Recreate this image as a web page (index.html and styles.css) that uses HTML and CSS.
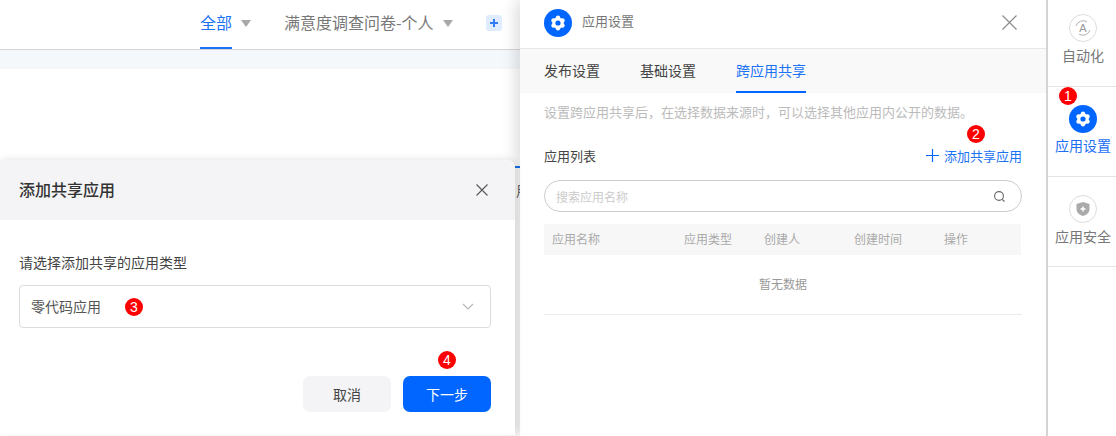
FILE: index.html
```html
<!DOCTYPE html>
<html lang="zh-CN">
<head>
<meta charset="utf-8">
<title>应用设置</title>
<link rel="stylesheet" href="styles.css">
</head>
<body>
<div class="app">
  <main class="main">
    <nav class="top-tabs">
      <div class="top-tab active"><span class="top-label">全部</span><i class="caret"></i></div>
      <div class="top-tab second"><span class="top-label">满意度调查问卷-个人</span><i class="caret"></i></div>
      <div class="add-tab"><svg width="10" height="10" viewBox="0 0 10 10"><path d="M5 1v8M1 5h8" stroke="#2f7cf6" stroke-width="2"/></svg></div>
    </nav>
    <div class="strip"></div>
    <div class="behind"><span class="behind-text">用</span></div>
  </main>

  <section class="drawer">
    <header class="drawer-head">
      <svg class="gear" width="28" height="28" viewBox="0 0 28 28"><circle cx="14" cy="14" r="14" fill="#0066ff"/><g fill="#fff"><circle cx="14" cy="14" r="5.800"/><circle cx="14" cy="8.800" r="2.200"/><circle cx="14" cy="19.200" r="2.200"/><circle cx="9.500" cy="11.400" r="2.200"/><circle cx="18.500" cy="11.400" r="2.200"/><circle cx="9.500" cy="16.600" r="2.200"/><circle cx="18.500" cy="16.600" r="2.200"/></g><circle cx="14" cy="14" r="2.600" fill="#0066ff"/></svg>
      <span class="drawer-title">应用设置</span>
      <svg class="drawer-close" width="15" height="15" viewBox="0 0 15 15"><path d="M.5.5l14 14M14.500.5l-14 14" stroke="#8c8c8c" stroke-width="1.200" fill="none"/></svg>
    </header>
    <div class="drawer-tabs">
      <span class="drawer-tab">发布设置</span>
      <span class="drawer-tab">基础设置</span>
      <span class="drawer-tab current">跨应用共享</span>
    </div>
    <div class="drawer-body">
      <p class="desc">设置跨应用共享后，在选择数据来源时，可以选择其他应用内公开的数据。</p>
      <div class="list-head">
        <span class="list-title">应用列表</span>
        <span class="add-link">
          <span class="badge badge-two">2</span>
          <svg width="13" height="13" viewBox="0 0 13 13"><path d="M6.500 0v13M0 6.500h13" stroke="#0066ff" stroke-width="1.200"/></svg>
          添加共享应用
        </span>
      </div>
      <div class="search">
        <span class="placeholder">搜索应用名称</span>
        <svg width="13" height="13" viewBox="0 0 13 13"><circle cx="6" cy="6" r="4.400" stroke="#666" stroke-width="1.100" fill="none"/><path d="M9.300 9.300l2.200 2.200" stroke="#666" stroke-width="1.100"/></svg>
      </div>
      <div class="table-head">
        <span class="col-name">应用名称</span>
        <span class="col-type">应用类型</span>
        <span class="col-owner">创建人</span>
        <span class="col-time">创建时间</span>
        <span>操作</span>
      </div>
      <div class="empty">暂无数据</div>
    </div>
  </section>

  <aside class="rail">
    <div class="rail-item first">
      <svg width="28" height="28" viewBox="0 0 28 28"><circle cx="14" cy="14" r="13.500" fill="#fff" stroke="#dcdcdc"/><path d="M7 12a7.500 7.500 0 0 1 11-4.200M21 16a7.500 7.500 0 0 1-11 4.200" fill="none" stroke="#b0b0b0" stroke-width="1"/><text class="auto-a" x="14" y="18" text-anchor="middle">A</text></svg>
      <span class="rail-label">自动化</span>
    </div>
    <div class="rail-item selected">
      <span class="badge badge-one">1</span>
      <svg width="28" height="28" viewBox="0 0 28 28"><circle cx="14" cy="14" r="14" fill="#0066ff"/><g fill="#fff"><circle cx="14" cy="14" r="5.800"/><circle cx="14" cy="8.800" r="2.200"/><circle cx="14" cy="19.200" r="2.200"/><circle cx="9.500" cy="11.400" r="2.200"/><circle cx="18.500" cy="11.400" r="2.200"/><circle cx="9.500" cy="16.600" r="2.200"/><circle cx="18.500" cy="16.600" r="2.200"/></g><circle cx="14" cy="14" r="2.600" fill="#0066ff"/></svg>
      <span class="rail-label">应用设置</span>
    </div>
    <div class="rail-item">
      <svg width="28" height="28" viewBox="0 0 28 28"><circle cx="14" cy="14" r="13.500" fill="#fff" stroke="#dcdcdc"/><path d="M14 7l6.500 2v5c0 3.600-2.800 6-6.500 7-3.700-1-6.500-3.400-6.500-7V9z" fill="#aaa"/><path d="M14 11.500v5M11.500 14h5" stroke="#fff" stroke-width="1.500"/></svg>
      <span class="rail-label">应用安全</span>
    </div>
  </aside>

  <div class="modal">
    <header class="modal-head">
      <h2 class="modal-title">添加共享应用</h2>
      <svg width="12" height="12" viewBox="0 0 12 12"><path d="M.5.5l11 11M11.500.5l-11 11" stroke="#555" stroke-width="1.100" fill="none"/></svg>
    </header>
    <div class="modal-body">
      <div class="field-label">请选择添加共享的应用类型</div>
      <div class="select">
        <span class="select-value">零代码应用</span>
        <span class="badge badge-three">3</span>
        <svg class="chevron" width="12" height="7" viewBox="0 0 12 7"><path d="M1 1l5 5 5-5" stroke="#b5b5b5" stroke-width="1.100" fill="none"/></svg>
      </div>
      <div class="actions">
        <button class="btn btn-cancel">取消</button>
        <button class="btn btn-next"><span class="badge badge-four">4</span>下一步</button>
      </div>
    </div>
  </div>
</div>
</body>
</html>
```

FILE: styles.css
```css
* { box-sizing: border-box; }
html, body { margin: 0; padding: 0; }
body {
  width: 1116px;
  height: 436px;
  overflow: hidden;
  background: #fff;
  font-family: "Noto Sans CJK SC", "Liberation Sans", sans-serif;
  color: #333;
}
.app { position: relative; display: flex; width: 1116px; height: 436px; overflow: hidden; }

/* left page behind the overlays */
.main { width: 520px; flex: none; overflow: hidden; }
.top-tabs {
  display: flex;
  align-items: stretch;
  height: 50px;
  padding-left: 200px;
  border-bottom: 1px solid #d6d6d6;
}
.top-tab { display: flex; align-items: center; gap: 9px; color: #777; font-size: 16px; }
.top-label { display: flex; align-items: center; height: 49px; padding-bottom: 4px; border-bottom: 2px solid transparent; }
.top-tab.active { color: #1a73f5; }
.top-tab.active .top-label { border-bottom-color: #1a73f5; }
.top-tab.second { margin-left: 33px; }
.caret {
  width: 0;
  height: 0;
  margin-top: -2px;
  border-left: 5.500px solid transparent;
  border-right: 5.500px solid transparent;
  border-top: 7px solid #a8a8a8;
}
.add-tab {
  display: flex;
  align-items: center;
  justify-content: center;
  align-self: flex-start;
  width: 16px;
  height: 16px;
  margin: 15px 0 0 33px;
  border-radius: 3px;
  background: #dfebff;
}
.strip { height: 19px; background: #f5f8fb; }
.behind {
  display: flex;
  justify-content: flex-end;
  height: 50px;
  margin-top: 97px;
  border-top: 2px solid #1a73f5;
  font-size: 14px;
  color: #666;
}
.behind-text { margin-top: 12px; width: 4px; overflow: hidden; }

/* settings drawer */
.drawer {
  position: relative;
  display: flex;
  flex-direction: column;
  width: 526px;
  flex: none;
  background: #fff;
  box-shadow: -4px 0 14px rgba(0, 0, 0, .14);
}
.drawer-head {
  display: flex;
  align-items: center;
  flex: none;
  height: 49px;
  padding: 0 29px 3px 24px;
  border-bottom: 1px solid #e6e6e6;
}
.drawer-title { margin: 0 0 4px 10px; font-size: 13px; color: #777; }
.drawer-close { margin-left: auto; }
.drawer-tabs {
  display: flex;
  gap: 40px;
  flex: none;
  height: 44px;
  padding-left: 24px;
  background: #f9f9f9;
  font-size: 14px;
  color: #444;
}
.drawer-tab { display: flex; align-items: center; border-bottom: 2px solid transparent; }
.drawer-tab.current { color: #1a73f5; border-bottom-color: #0066ff; }
.drawer-body { padding: 0 24px; }
.desc { margin: 9px 0 0; height: 20px; line-height: 20px; font-size: 13px; color: #bbb; white-space: nowrap; }
.list-head { display: flex; justify-content: space-between; align-items: center; height: 20px; margin-top: 23px; }
.list-title { font-size: 13px; color: #444; }
.add-link { position: relative; display: flex; align-items: center; gap: 5px; font-size: 13px; color: #1a73f5; }
.search {
  display: flex;
  justify-content: space-between;
  align-items: center;
  height: 32px;
  margin-top: 15px;
  padding: 0 15px 0 11px;
  border: 1px solid #ccc;
  border-radius: 16px;
}
.placeholder { font-size: 12px; color: #ccc; }
.table-head {
  display: flex;
  align-items: center;
  width: 477px;
  height: 31px;
  margin-top: 12px;
  padding: 0 0 3px 8px;
  background: #f7f7f7;
  font-size: 12px;
  color: #aaa;
}
.col-name { width: 132px; }
.col-type { width: 80px; }
.col-owner { width: 90px; }
.col-time { width: 90px; }
.empty {
  display: flex;
  align-items: center;
  justify-content: center;
  height: 60px;
  padding-bottom: 2px;
  border-bottom: 1px solid #ebebf2;
  font-size: 12px;
  color: #999;
}

/* right rail */
.rail { position: relative; width: 70px; flex: none; background: #fff; border-left: 2px solid #d4d4d4; }
.rail-item {
  position: relative;
  display: flex;
  flex-direction: column;
  align-items: center;
  height: 90px;
  padding: 18px 0 0 2px;
  border-bottom: 1px solid #e4e4e4;
}
.rail-item.first { height: 87px; padding-top: 14px; }
.rail-label { margin-top: 3px; line-height: 20px; font-size: 14px; color: #777; white-space: nowrap; }
.rail-item.selected .rail-label { margin-top: 2px; color: #1a6ff5; }
.auto-a { font: 400 11px "Liberation Sans", sans-serif; fill: #999; }

/* numbered annotations */
.badge {
  position: absolute;
  display: flex;
  align-items: center;
  justify-content: center;
  width: 18px;
  height: 18px;
  border-radius: 50%;
  background: #fe0000;
  color: #fff;
  font: 14px/1 "Liberation Sans", sans-serif;
}
.badge-one { left: 11px; top: 0; }
.badge-two { left: 41px; top: -21px; }
.badge-three { left: 105px; top: 12px; }
.badge-four { left: 35px; top: -25px; }

/* add-shared-app modal */
.modal {
  position: absolute;
  left: 0;
  top: 160px;
  width: 515px;
  height: 275px;
  background: #fff;
  border-radius: 0 8px 0 0;
  box-shadow: 0 -2px 10px rgba(0, 0, 0, .06), 3px 0 6px rgba(0, 0, 0, .05);
}
.modal-head {
  display: flex;
  align-items: center;
  justify-content: space-between;
  height: 60px;
  padding: 0 27px 0 19px;
  background: #f4f4f6;
  border-radius: 0 8px 0 0;
}
.modal-title { margin: 0 0 2px; font-size: 16px; font-weight: 500; color: #333; }
.modal-body { padding: 32px 24px 0 19px; }
.field-label { height: 20px; line-height: 20px; font-size: 14px; color: #444; }
.select {
  position: relative;
  display: flex;
  justify-content: space-between;
  align-items: center;
  height: 43px;
  margin-top: 13px;
  padding: 0 16px 0 11px;
  border: 1px solid #dcdcdc;
  border-radius: 4px;
  font-size: 14px;
  color: #555;
}
.select-value { margin-bottom: 2px; }
.actions { display: flex; justify-content: flex-end; gap: 12px; margin-top: 48px; }
.btn {
  position: relative;
  width: 88px;
  height: 36px;
  border: 0;
  border-radius: 7px;
  font-family: inherit;
  font-size: 14px;
}
.btn-cancel { background: #f4f4f6; color: #444; }
.btn-next { background: #0066ff; color: #fff; }
```
